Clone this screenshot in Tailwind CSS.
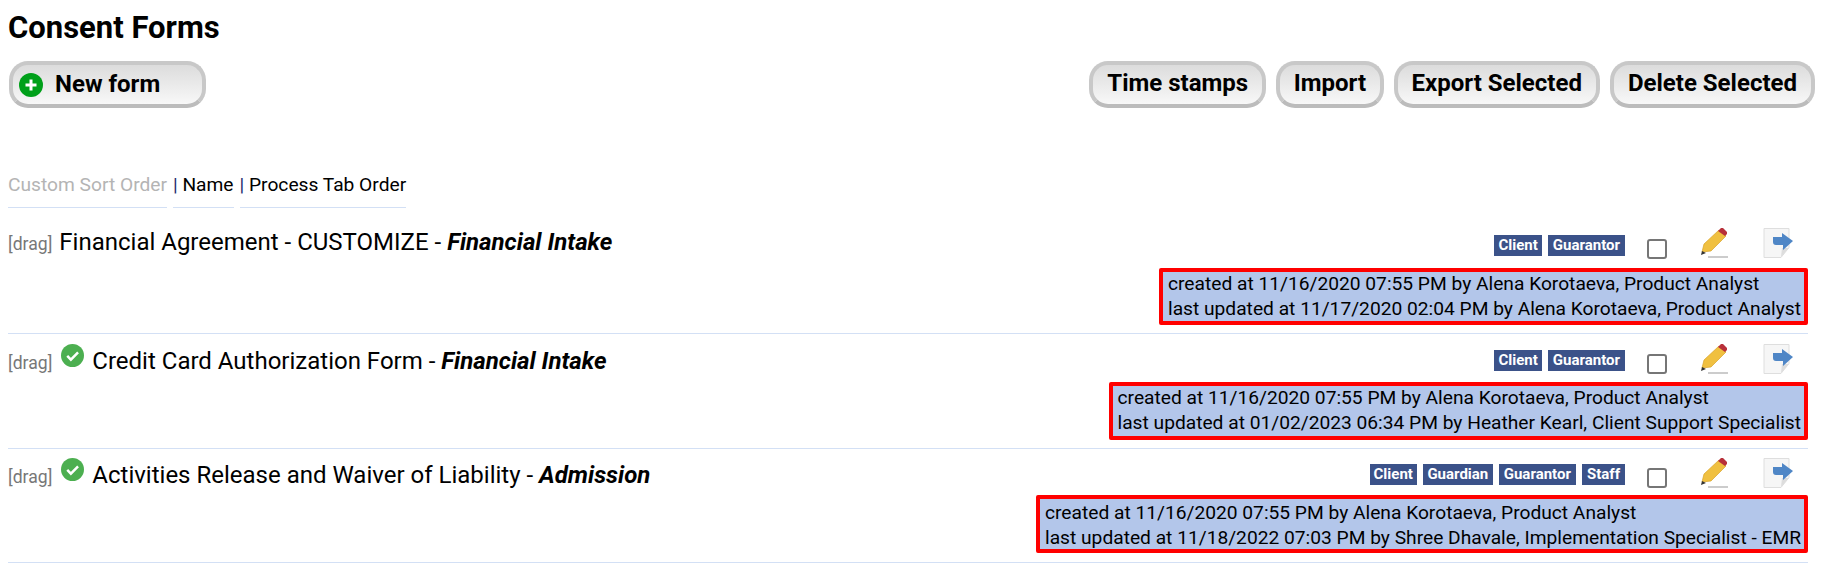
<!DOCTYPE html>
<html>
<head>
<meta charset="utf-8">
<script src="https://cdn.jsdelivr.net/npm/@tailwindcss/browser@4"></script>
</head>
<body class="bg-white text-black font-['Roboto',sans-serif] overflow-hidden">
<div class="w-[1834px] h-[567px] pl-2 overflow-hidden">
  <h1 class="text-[31px] leading-[36px] font-bold pt-[10px] h-[61px] m-0">Consent Forms</h1>
  <div class="flex justify-between items-start h-[47px] pr-[19px]">
    <button class="w-[197px] h-[47px] rounded-[19px] ml-px border-[4px] border-[#c8c8c8] border-b-[#bcbcbc] bg-gradient-to-b from-[#dcdcdc] to-[#f8f8f8] flex items-center pl-[6px] pb-[2px] text-[24px] font-bold">
      <svg class="w-6 h-6 mr-3 mt-[2px]" viewBox="0 0 24 24"><circle cx="12" cy="12" r="12" fill="#00a01a"/><path d="M12 6.5v11M6.5 12h11" stroke="#fff" stroke-width="3"/></svg>New form
    </button>
    <div class="flex gap-[10px]">
      <button class="h-[47px] rounded-[19px] border-[4px] border-[#c8c8c8] border-b-[#bcbcbc] bg-gradient-to-b from-[#dcdcdc] to-[#f8f8f8] px-[14px] pb-[3px] text-[24px] font-bold">Time stamps</button>
      <button class="h-[47px] rounded-[19px] border-[4px] border-[#c8c8c8] border-b-[#bcbcbc] bg-gradient-to-b from-[#dcdcdc] to-[#f8f8f8] px-[13.5px] pb-[3px] text-[24px] font-bold">Import</button>
      <button class="h-[47px] rounded-[19px] border-[4px] border-[#c8c8c8] border-b-[#bcbcbc] bg-gradient-to-b from-[#dcdcdc] to-[#f8f8f8] px-[14px] pb-[3px] text-[24px] font-bold">Export Selected</button>
      <button class="h-[47px] rounded-[19px] border-[4px] border-[#c8c8c8] border-b-[#bcbcbc] bg-gradient-to-b from-[#dcdcdc] to-[#f8f8f8] px-[14px] pb-[3px] text-[24px] font-bold">Delete Selected</button>
    </div>
  </div>
  <div class="flex items-start gap-[6px] pt-[65px] text-[19.2px] leading-[24px] h-[111px]">
    <span class="text-[#b4b4b4] border-b border-[#d3e0f5] h-[35px]">Custom Sort Order</span>
    <span class="border-b border-[#d3e0f5] h-[35px]"><span class="text-[#1a2a6c]">|</span> Name</span>
    <span class="border-b border-[#d3e0f5] h-[35px]"><span class="text-[#1a2a6c]">|</span> Process Tab Order</span>
  </div>

  <!-- row 1 -->
  <div class="w-[1800px] h-[115px] border-b border-[#d3e0f5] flex justify-between pt-[9px]">
    <div class="flex items-start">
      <span class="text-[17.6px] leading-[24px] text-[#777] mt-[4px]">[drag]</span>
      <span class="text-[24px] leading-[28px] ml-[7px]">Financial Agreement - CUSTOMIZE - <b class="italic font-bold">Financial Intake</b></span>
    </div>
    <div class="flex flex-col items-end">
      <div class="flex items-start h-[40px] pr-[15px]">
        <div class="flex gap-[6px] mt-[7px]">
          <span class="bg-[#3b5289] text-white text-[15px] font-bold leading-[21px] px-[4px]">Client</span>
          <span class="bg-[#3b5289] text-white text-[15px] font-bold leading-[21px] px-[5px]">Guarantor</span>
        </div>
        <span class="w-5 h-5 border-2 border-[#767676] rounded-[3px] ml-[22px] mt-[11px]"></span>
        <svg class="w-[28px] h-[30px] ml-[33px]" viewBox="0 0 28 30"><path d="M8 29h20" stroke="#ccc" stroke-width="2"/><path d="M2 24l2-8L19 2l7 6L11 23z" fill="#f0c040" stroke="#d9a428" stroke-width=".7"/><path d="M18 3l3-3h2l4 4v2l-2 2z" fill="#b8303a"/><path d="M1 27l1-4 4 2z" fill="#333"/></svg>
        <svg class="w-[30px] h-[30px] ml-[35px]" viewBox="0 0 30 30"><path d="M1 .5h25v19l-8 10H1z" fill="#f6f6f6" stroke="#dedede"/><path d="M18 29l1-9 7 0z" fill="#ddd"/><path d="M10 9h9V5l11 8-10 9v-5h-7q-3 0-3-3z" fill="#4f86c6"/></svg>
      </div>
      <div class="border-4 border-[#ff0000] rounded-[2px] bg-[#b3c6ea] text-[19.2px] leading-[24.5px] pl-[5px] pr-[3px] h-[57px]">created at 11/16/2020 07:55 PM by Alena Korotaeva, Product Analyst<br>last updated at 11/17/2020 02:04 PM by Alena Korotaeva, Product Analyst</div>
    </div>
  </div>

  <!-- row 2 -->
  <div class="w-[1800px] h-[115px] border-b border-[#d3e0f5] flex justify-between pt-[10px]">
    <div class="flex items-start">
      <span class="text-[17.6px] leading-[24px] text-[#777] mt-[7px]">[drag]</span>
      <svg class="w-[23px] h-[23px] ml-[9px]" viewBox="0 0 24 24"><circle cx="12" cy="12" r="12" fill="#4caf50"/><path d="M6.5 12.5l3.8 3.8 7.5-7.5" fill="none" stroke="#fff" stroke-width="2.6"/></svg>
      <span class="text-[24px] leading-[28px] ml-[8px] mt-[3px]">Credit Card Authorization Form - <b class="italic font-bold">Financial Intake</b></span>
    </div>
    <div class="flex flex-col items-end">
      <div class="flex items-start h-[38px] pr-[15px]">
        <div class="flex gap-[6px] mt-[6px]">
          <span class="bg-[#3b5289] text-white text-[15px] font-bold leading-[21px] px-[4px]">Client</span>
          <span class="bg-[#3b5289] text-white text-[15px] font-bold leading-[21px] px-[5px]">Guarantor</span>
        </div>
        <span class="w-5 h-5 border-2 border-[#767676] rounded-[3px] ml-[22px] mt-[10px]"></span>
        <svg class="w-[28px] h-[30px] ml-[33px]" viewBox="0 0 28 30"><path d="M8 29h20" stroke="#ccc" stroke-width="2"/><path d="M2 24l2-8L19 2l7 6L11 23z" fill="#f0c040" stroke="#d9a428" stroke-width=".7"/><path d="M18 3l3-3h2l4 4v2l-2 2z" fill="#b8303a"/><path d="M1 27l1-4 4 2z" fill="#333"/></svg>
        <svg class="w-[30px] h-[30px] ml-[35px]" viewBox="0 0 30 30"><path d="M1 .5h25v19l-8 10H1z" fill="#f6f6f6" stroke="#dedede"/><path d="M18 29l1-9 7 0z" fill="#ddd"/><path d="M10 9h9V5l11 8-10 9v-5h-7q-3 0-3-3z" fill="#4f86c6"/></svg>
      </div>
      <div class="border-4 border-[#ff0000] rounded-[2px] bg-[#b3c6ea] text-[19.2px] leading-[24.5px] pl-[5px] pr-[3px] h-[58px]">created at 11/16/2020 07:55 PM by Alena Korotaeva, Product Analyst<br>last updated at 01/02/2023 06:34 PM by Heather Kearl, Client Support Specialist</div>
    </div>
  </div>

  <!-- row 3 -->
  <div class="w-[1800px] h-[114px] border-b border-[#d3e0f5] flex justify-between pt-[9px]">
    <div class="flex items-start">
      <span class="text-[17.6px] leading-[24px] text-[#777] mt-[7px]">[drag]</span>
      <svg class="w-[23px] h-[23px] ml-[9px]" viewBox="0 0 24 24"><circle cx="12" cy="12" r="12" fill="#4caf50"/><path d="M6.5 12.5l3.8 3.8 7.5-7.5" fill="none" stroke="#fff" stroke-width="2.6"/></svg>
      <span class="text-[24px] leading-[28px] ml-[8px] mt-[3px]">Activities Release and Waiver of Liability - <b class="italic font-bold">Admission</b></span>
    </div>
    <div class="flex flex-col items-end">
      <div class="flex items-start h-[37px] pr-[15px]">
        <div class="flex gap-[6px] mt-[6px]">
          <span class="bg-[#3b5289] text-white text-[15px] font-bold leading-[21px] px-[4px]">Client</span>
          <span class="bg-[#3b5289] text-white text-[15px] font-bold leading-[21px] px-[4.5px]">Guardian</span>
          <span class="bg-[#3b5289] text-white text-[15px] font-bold leading-[21px] px-[5px]">Guarantor</span>
          <span class="bg-[#3b5289] text-white text-[15px] font-bold leading-[21px] px-[5px]">Staff</span>
        </div>
        <span class="w-5 h-5 border-2 border-[#767676] rounded-[3px] ml-[22px] mt-[10px]"></span>
        <svg class="w-[28px] h-[30px] ml-[33px]" viewBox="0 0 28 30"><path d="M8 29h20" stroke="#ccc" stroke-width="2"/><path d="M2 24l2-8L19 2l7 6L11 23z" fill="#f0c040" stroke="#d9a428" stroke-width=".7"/><path d="M18 3l3-3h2l4 4v2l-2 2z" fill="#b8303a"/><path d="M1 27l1-4 4 2z" fill="#333"/></svg>
        <svg class="w-[30px] h-[30px] ml-[35px]" viewBox="0 0 30 30"><path d="M1 .5h25v19l-8 10H1z" fill="#f6f6f6" stroke="#dedede"/><path d="M18 29l1-9 7 0z" fill="#ddd"/><path d="M10 9h9V5l11 8-10 9v-5h-7q-3 0-3-3z" fill="#4f86c6"/></svg>
      </div>
      <div class="border-4 border-[#ff0000] rounded-[2px] bg-[#b3c6ea] text-[19.2px] leading-[24.5px] pl-[5px] pr-[3px] pt-[2px] h-[58px]">created at 11/16/2020 07:55 PM by Alena Korotaeva, Product Analyst<br>last updated at 11/18/2022 07:03 PM by Shree Dhavale, Implementation Specialist - EMR</div>
    </div>
  </div>
</div>
</body>
</html>
